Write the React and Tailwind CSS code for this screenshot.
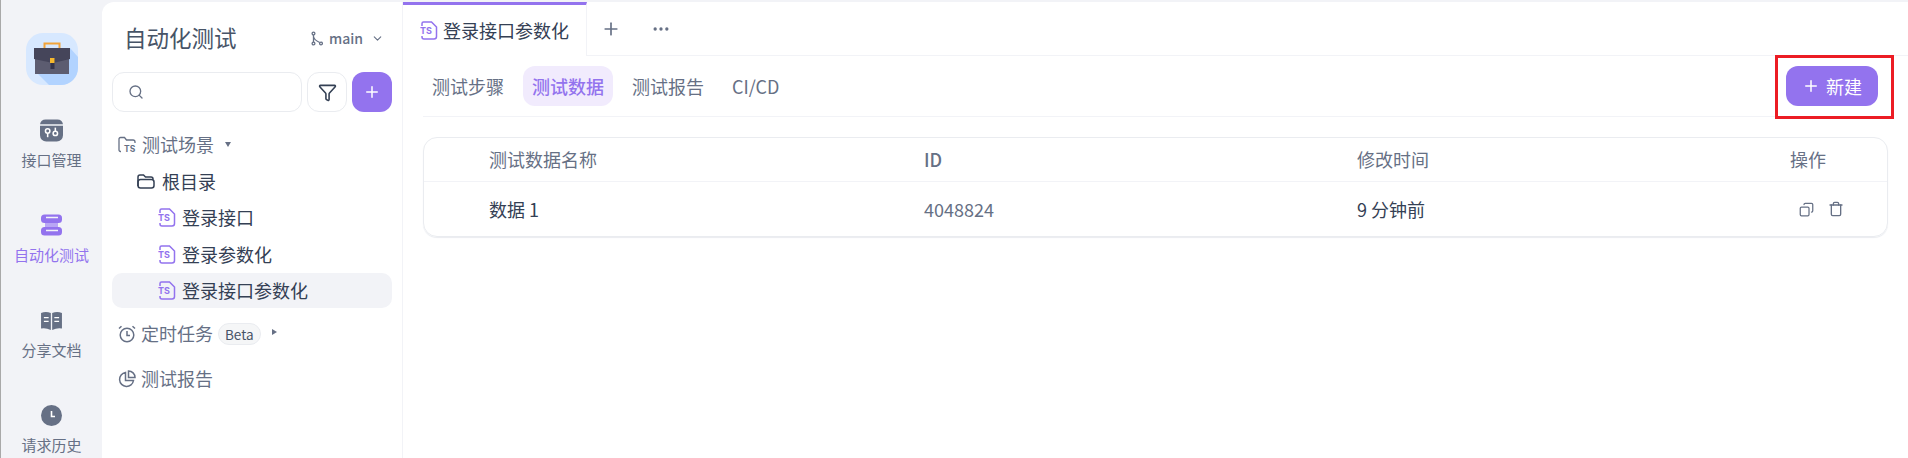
import { ChevronDown, Copy, Ellipsis, Funnel, Plus, Search, Trash } from 'lucide-react';

const FONT = "font-['Noto_Sans_CJK_SC','Noto_Sans',sans-serif]";

function Logo() {
  return (
    <svg width="52" height="52" viewBox="0 0 52 52">
      <rect width="52" height="52" rx="17" fill="#d7e8ff" />
      <path d="M9 38 L44 15 L52 24 V35 A17 17 0 0 1 35 52 H23 Z" fill="#b2d3ff" />
      <rect x="18.500" y="10.500" width="15" height="8" fill="none" stroke="#f2a33a" strokeWidth="2" />
      <rect x="9" y="15" width="34" height="26" fill="#5c5c70" />
      <path d="M8 15 H44 V26 L27 30 L8 26 Z" fill="#45455a" />
      <rect x="24.500" y="26" width="4" height="10" fill="#34344a" />
      <rect x="24" y="25" width="4.500" height="5" fill="#f5b82e" />
    </svg>
  );
}

function ApiIcon() {
  return (
    <svg width="23" height="23" viewBox="0 0 24 24">
      <path d="M6 0.500 H18 A6 6 0 0 1 24 5.500 H0 A6 6 0 0 1 6 0.500 Z M0 7 H24 V17 A6.500 6.500 0 0 1 17.500 23.500 H6.500 A6.500 6.500 0 0 1 0 17 Z" fill="#667085" />
      <circle cx="8" cy="12.500" r="2.300" fill="none" stroke="#fff" strokeWidth="1.600" />
      <path d="M8 15 V19" stroke="#fff" strokeWidth="1.600" />
      <circle cx="16" cy="15" r="2.300" fill="none" stroke="#fff" strokeWidth="1.600" />
      <path d="M16 9 V12.500" stroke="#fff" strokeWidth="1.600" />
    </svg>
  );
}

function AutoIcon() {
  return (
    <svg width="21" height="22" viewBox="0 0 21 22" fill="none">
      <rect x="4" y="7" width="13" height="8" fill="#b9a6f5" />
      <rect x="0" y="0.500" width="21" height="8.500" rx="3.500" fill="#9373ee" />
      <rect x="0" y="13" width="21" height="8.500" rx="3.500" fill="#9373ee" />
      <path d="M5 3.500 H17 M5 16.500 H17" stroke="#f2f3f7" strokeWidth="1.500" />
    </svg>
  );
}

function BookIcon() {
  return (
    <svg width="21" height="19" viewBox="0 0 22 20">
      <path d="M0 2 Q5 0 10.300 2 V20 Q5 17.500 0 18.500 Z M11.700 2 Q17 0 22 2 V18.500 Q17 17.500 11.700 20 Z" fill="#667085" />
      <path d="M3 7 H8 M3 11 H8 M14 7 H19 M14 11 H19" stroke="#fff" strokeWidth="1.300" />
    </svg>
  );
}

function ClockIcon() {
  return (
    <svg width="21" height="21" viewBox="0 0 21 21">
      <circle cx="10.500" cy="10.500" r="10.500" fill="#667085" />
      <path d="M10.500 6 V11.500 H14" fill="none" stroke="#fff" strokeWidth="1.600" />
    </svg>
  );
}

function BranchIcon() {
  return (
    <svg width="12" height="15" viewBox="0 0 12 15" fill="none" stroke="#667085" strokeWidth="1.300">
      <circle cx="2.500" cy="2.500" r="1.400" />
      <circle cx="2.500" cy="12.500" r="1.400" />
      <circle cx="10" cy="12.500" r="1.400" />
      <path d="M2.500 4 V11 M2.500 5.500 Q3 9 8.700 11.500" />
    </svg>
  );
}

function TsFileIcon() {
  return (
    <svg width="18" height="19" viewBox="0 0 18 19" fill="none" className="shrink-0">
      <path d="M2 5 V2.500 A1.500 1.500 0 0 1 3.500 1 H11.500 L16.500 6 V15.500 A2.500 2.500 0 0 1 14 18 H4 A2 2 0 0 1 2 16 V15" stroke="#9373ee" strokeWidth="1.500" />
      <text x="0" y="13" fontSize="9" fontWeight="700" fill="#9373ee" fontFamily="Inter, sans-serif">TS</text>
    </svg>
  );
}

function TsFolderIcon() {
  return (
    <svg width="19" height="17" viewBox="0 0 19 17" fill="none" className="shrink-0">
      <path d="M3 15.500 H2.500 A1.500 1.500 0 0 1 1 14 V3 A1.500 1.500 0 0 1 2.500 1.500 H6.500 L8.500 4 H15 A2 2 0 0 1 17 6 V7" stroke="#667085" strokeWidth="1.300" />
      <text x="6" y="16" fontSize="8.500" fontWeight="700" fill="#667085" fontFamily="Inter, sans-serif">TS</text>
    </svg>
  );
}

function FolderIcon() {
  return (
    <svg width="18" height="15" viewBox="0 0 18 15" fill="none" stroke="#344054" strokeWidth="1.500" className="shrink-0">
      <path d="M1 12 V3 A2 2 0 0 1 3 1 H6.500 L8.500 3 H14 A2 2 0 0 1 16 5 V5.500" />
      <rect x="1" y="5.500" width="16" height="8.500" rx="2.500" />
    </svg>
  );
}

function AlarmIcon() {
  return (
    <svg width="18" height="18" viewBox="0 0 18 18" fill="none" stroke="#667085" strokeWidth="1.500" className="shrink-0">
      <circle cx="9" cy="10" r="6.800" />
      <path d="M9 6 V10.500 H12 M1 3.500 L3.500 1.200 M17 3.500 L14.500 1.200" />
    </svg>
  );
}

function PieIcon() {
  return (
    <svg width="18" height="18" viewBox="0 0 18 18" fill="none" stroke="#667085" strokeWidth="1.500" className="shrink-0">
      <path d="M7.500 2.500 A7 7 0 1 0 15.500 10.500 H7.500 Z" />
      <path d="M10.500 1 A6.500 6.500 0 0 1 17 7.500 H10.500 Z" />
    </svg>
  );
}

function NavItem({ icon, label, active }) {
  return (
    <div className="h-[95px] shrink-0 flex flex-col items-center justify-center gap-[7px]">
      <div className="h-[25px] flex items-center justify-center">{icon}</div>
      <span className={`text-[15px] leading-[20px] whitespace-nowrap ${active ? 'text-[#9373ee]' : 'text-[#667085]'}`}>{label}</span>
    </div>
  );
}

function FileRow({ label, active }) {
  return (
    <div className={`h-[35px] mb-[1.500px] pl-[46px] flex items-center gap-[6px] rounded-[10px] ${active ? 'bg-[#f2f3f7]' : ''}`}>
      <TsFileIcon />
      <span className="text-[18px] text-[#344054]">{label}</span>
    </div>
  );
}

function Sidebar() {
  return (
    <aside className="w-[301px] shrink-0 bg-white rounded-tl-[12px] border-r border-[#f2f3f7] px-[10px]">
      <div className="h-[70px] pt-[2px] flex items-center justify-between pl-[12px] pr-[8px]">
        <span className="text-[22.500px] text-[#475467]">自动化测试</span>
        <div className="flex items-center gap-[6px]">
          <BranchIcon />
          <span className="text-[14px] font-medium text-[#667085]">main</span>
          <ChevronDown size={13} color="#667085" className="ml-[2px]" />
        </div>
      </div>
      <div className="flex gap-[5px]">
        <div className="flex-1 h-[40px] rounded-[12px] border border-[#eaecf0] flex items-center pl-[15px]">
          <Search size={16} color="#667085" />
        </div>
        <div className="w-[40px] h-[40px] rounded-[12px] border border-[#eaecf0] flex items-center justify-center">
          <Funnel size={19} color="#344054" />
        </div>
        <div className="w-[40px] h-[40px] rounded-[12px] bg-[#9373ee] flex items-center justify-center">
          <Plus size={18} color="#fff" />
        </div>
      </div>
      <div className="mt-[15px]">
        <div className="h-[35px] mb-[1.500px] pl-[6px] flex items-center gap-[5px] text-[#667085]">
          <TsFolderIcon />
          <span className="text-[18px]">测试场景</span>
          <span className="ml-[6px] w-0 h-0 border-x-[3.500px] border-x-transparent border-t-[5px] border-t-[#667085]" />
        </div>
        <div className="h-[35px] mb-[1.500px] pl-[25px] flex items-center gap-[7px]">
          <FolderIcon />
          <span className="text-[18px] text-[#344054]">根目录</span>
        </div>
        <FileRow label="登录接口" />
        <FileRow label="登录参数化" />
        <FileRow label="登录接口参数化" active />
        <div className="h-[35px] mt-[8px] pl-[6px] flex items-center gap-[5px] text-[#667085]">
          <AlarmIcon />
          <span className="text-[18px]">定时任务</span>
          <span className="h-[22px] px-[6px] rounded-full bg-[#f5f6f7] border border-[#eaecf0] text-[13.500px] leading-[20px] text-[#475467]">Beta</span>
          <span className="ml-[6px] mb-[4px] w-0 h-0 border-y-[3.500px] border-y-transparent border-l-[5px] border-l-[#667085]" />
        </div>
        <div className="h-[35px] mt-[10px] pl-[6px] flex items-center gap-[5px] text-[#667085]">
          <PieIcon />
          <span className="text-[18px]">测试报告</span>
        </div>
      </div>
    </aside>
  );
}

function SubTab({ label, active }) {
  return (
    <div className={`h-[40px] px-[9px] flex items-center rounded-[12px] text-[18px] ${active ? 'bg-[#f1ebfd] text-[#9373ee] font-medium' : 'text-[#667085]'}`}>
      {label}
    </div>
  );
}

function Main() {
  return (
    <main className="flex-1 min-w-0 bg-white">
      <div className="h-[54px] flex">
        <div className="w-[184px] border-t-[3px] border-[#9373ee] border-r border-r-[#f2f3f7] flex items-center pl-[17px] gap-[5px]">
          <TsFileIcon />
          <span className="text-[18px] text-[#344054]">登录接口参数化</span>
        </div>
        <div className="flex-1 border-b border-[#f2f3f7] flex items-center pl-[14px] gap-[30px]">
          <Plus size={20} color="#667085" />
          <Ellipsis size={20} color="#667085" />
        </div>
      </div>
      <div className="ml-[20px] mr-[15px] h-[61px] border-b border-[#f2f3f7] flex items-center justify-between">
        <div className="flex gap-[10px]">
          <SubTab label="测试步骤" />
          <SubTab label="测试数据" active />
          <SubTab label="测试报告" />
          <SubTab label="CI/CD" />
        </div>
        <div className="relative mr-[15px]">
          <button className="w-[92px] h-[40px] rounded-[12px] bg-[#9373ee] text-white flex items-center justify-center gap-[6px] text-[18px]">
            <Plus size={18} />
            新建
          </button>
          <div className="absolute -left-[11px] -top-[11px] w-[119px] h-[64px] border-[3px] border-[#ec1c24]" />
        </div>
      </div>
      <div className="mt-[20px] ml-[20px] mr-[20px] h-[100px] rounded-[14px] border border-[#eaecf0] shadow-[0_1px_1px_#eaecf0] flex flex-col">
        <div className="h-[44px] border-b border-[#f2f3f7] grid grid-cols-[500px_433px_433px_1fr] items-center text-[18px] text-[#667085]">
          <span className="pl-[65px]">测试数据名称</span>
          <span className="font-medium">ID</span>
          <span>修改时间</span>
          <span>操作</span>
        </div>
        <div className="flex-1 grid grid-cols-[500px_433px_433px_1fr] items-center text-[18px]">
          <span className="pl-[65px] text-[#344054]">数据 1</span>
          <span className="text-[#667085]">4048824</span>
          <span className="text-[#344054]">9 分钟前</span>
          <span className="flex items-center gap-[14px] pl-[9px]">
            <Copy size={15} color="#667085" className="-scale-x-100" />
            <Trash size={16} color="#667085" />
          </span>
        </div>
      </div>
    </main>
  );
}

export default function App() {
  return (
    <div className={`h-[458px] w-[1908px] overflow-hidden bg-[#f2f3f7] pt-[2px] border-l border-[#a9a9a9] flex ${FONT}`}>
      <nav className="w-[101px] shrink-0 flex flex-col items-center">
        <div className="mt-[31px] mb-[11px] shrink-0"><Logo /></div>
        <NavItem icon={<ApiIcon />} label="接口管理" />
        <NavItem icon={<AutoIcon />} label="自动化测试" active />
        <NavItem icon={<BookIcon />} label="分享文档" />
        <NavItem icon={<ClockIcon />} label="请求历史" />
      </nav>
      <Sidebar />
      <Main />
    </div>
  );
}
